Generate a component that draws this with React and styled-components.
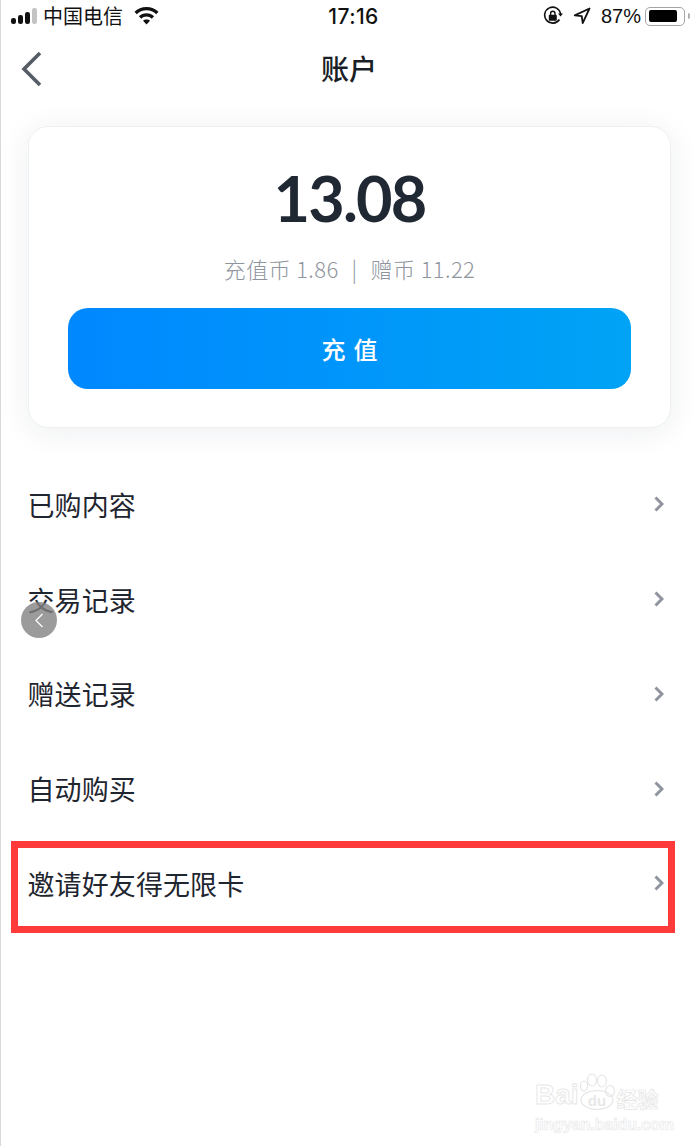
import React from 'react';
import styled, { createGlobalStyle } from 'styled-components';

const cjk = '"Noto Sans CJK SC", "Noto Sans", sans-serif';

const GlobalStyle = createGlobalStyle`
  html, body {
    margin: 0;
    padding: 0;
    background: #fff;
  }
  * {
    box-sizing: border-box;
  }
`;

const Page = styled.div`
  position: relative;
  width: 697px;
  height: 1146px;
  overflow: hidden;
  background: #fff;
  border-left: 1px solid #d9d9d9;
  font-family: ${cjk};
  color: #1f2630;
`;

const StatusBar = styled.div`
  display: grid;
  grid-template-columns: 1fr auto 1fr;
  align-items: center;
  height: 32px;
  padding: 0 7px 0 9px;
  color: #111;
  font-size: 20px;
`;

const StatusLeft = styled.div`
  display: flex;
  align-items: center;
  gap: 6px;
`;

const StatusRight = styled.div`
  display: flex;
  align-items: center;
  justify-content: flex-end;
  gap: 10px;
`;

const Carrier = styled.span`
  font-size: 20px;
  margin: 0 5px 2px 0;
`;

const Time = styled.span`
  font-family: "Inter", "Liberation Sans", sans-serif;
  font-size: 21px;
  font-weight: 500;
  letter-spacing: 0.4px;
  margin-left: 7px;
`;

const Percent = styled.span`
  font-family: "Liberation Sans", sans-serif;
  font-size: 20px;
  margin-right: -6px;
`;

const NavBar = styled.div`
  display: grid;
  grid-template-columns: 60px 1fr 60px;
  align-items: center;
  height: 74px;
`;

const BackButton = styled.div`
  display: flex;
  align-items: center;
  padding-left: 19px;
  color: #555c66;
`;

const NavTitle = styled.h1`
  margin: 0 0 2px;
  text-align: center;
  font-size: 28px;
  font-weight: 500;
  color: #1a1f27;
`;

const Card = styled.section`
  display: flex;
  flex-direction: column;
  align-items: center;
  width: 643px;
  height: 302px;
  margin: 20px 0 0 27px;
  padding: 30px 40px 0;
  background: #fff;
  border: 1px solid #f0f0f1;
  border-radius: 20px;
  box-shadow: 0 4px 30px rgba(30, 40, 60, 0.08);
`;

const Amount = styled.div`
  font-family: "Lato", "Liberation Sans", sans-serif;
  font-size: 63px;
  font-weight: 700;
  line-height: 82px;
  letter-spacing: -1.8px;
  color: #1f2833;
`;

const Balance = styled.div`
  display: flex;
  margin-top: 14px;
  font-size: 22px;
  font-weight: 300;
  line-height: 30px;
  letter-spacing: 0.4px;
  color: #8f959e;
`;

const Separator = styled.span`
  margin: 0 13px;
`;

const ChargeButton = styled.div`
  display: flex;
  align-items: center;
  justify-content: center;
  width: 563px;
  height: 81px;
  margin-top: 25px;
  border-radius: 20px;
  background: linear-gradient(90deg, #0088ff, #00a3f5);
  color: #fff;
  font-size: 24px;
  font-weight: 500;
  letter-spacing: 8px;
  text-indent: 8px;
`;

const Menu = styled.div`
  display: flex;
  flex-direction: column;
  margin-top: 29px;
`;

const Row = styled.div`
  position: relative;
  display: flex;
  align-items: center;
  justify-content: space-between;
  height: 94.75px;
  padding: 0 33px 0 26.5px;
  font-size: 27px;
  letter-spacing: 0.1px;
  color: #1f2630;
`;

const Highlight = styled.div`
  position: absolute;
  left: 10px;
  right: 22px;
  top: 5px;
  height: 92px;
  border: 7px solid #ff3a3a;
`;

const FloatingBack = styled.div`
  position: absolute;
  left: 20px;
  top: 602px;
  display: flex;
  align-items: center;
  justify-content: center;
  width: 36px;
  height: 36px;
  border-radius: 50%;
  background: rgba(130, 130, 130, 0.8);
  color: #fff;
`;

const Watermark = styled.div`
  position: absolute;
  left: 534px;
  top: 1072px;
  width: 130px;
  color: transparent;
  -webkit-text-stroke: 1px #e8e8e8;
`;

const LogoLine = styled.div`
  display: flex;
  align-items: flex-end;
  height: 38px;
  white-space: nowrap;
  font-family: "Liberation Sans", sans-serif;
  font-size: 28px;
  font-weight: 700;
  line-height: 30px;
`;

const LogoCjk = styled.span`
  font-family: ${cjk};
  font-size: 21px;
  line-height: 24px;
  -webkit-text-stroke: 0.7px #e4e4e4;
`;

const Paw = styled.svg`
  flex: none;
  width: 37px;
  height: 37px;
  margin: 0 1px 0 0;
`;

const PawText = styled.text`
  font-family: "Liberation Sans", sans-serif;
  font-size: 15px;
  font-weight: 700;
  stroke: none;
  fill: #e8e8e8;
  -webkit-text-stroke: 0;
`;

const Domain = styled.div`
  font-family: "Liberation Sans", sans-serif;
  font-size: 16px;
  font-weight: 700;
  line-height: 18px;
  letter-spacing: -0.1px;
  margin-top: 6px;
  white-space: nowrap;
  -webkit-text-stroke: 0.7px #e9e9e9;
`;

const BatteryShell = styled.div`
  display: flex;
  align-items: center;
  width: 40px;
  height: 19px;
  padding: 2.5px;
  border: 1.5px solid #a5a5a5;
  border-radius: 5px;
`;

const BatteryLevel = styled.div`
  width: 87%;
  height: 100%;
  background: #000;
  border-radius: 2px;
`;

const BatteryTip = styled.div`
  width: 2px;
  height: 6px;
  margin-left: -7px;
  background: #b0b0b0;
  border-radius: 0 2px 2px 0;
`;

const Signal = () => (
  <svg width="27" height="16" viewBox="0 0 27 16">
    <rect x="1" y="10" width="5" height="6" rx="2.2" fill="#111" />
    <rect x="8" y="7" width="5" height="9" rx="2.2" fill="#111" />
    <rect x="15" y="4" width="5" height="12" rx="2.2" fill="#111" />
    <rect x="22" y="0" width="5" height="16" rx="2.2" fill="#c4c4c4" />
  </svg>
);

const Wifi = () => (
  <svg width="25" height="18" viewBox="0 0 25 18">
    <path d="M12.5 0C7.8 0 3.6 1.8 .5 4.8l2.3 2.4c2.5-2.4 5.9-3.9 9.7-3.9s7.2 1.5 9.7 3.9l2.3-2.4C21.4 1.8 17.2 0 12.5 0z" fill="#111" />
    <path d="M12.5 6.3c-3 0-5.6 1.1-7.6 3l2.4 2.4c1.4-1.3 3.2-2.1 5.2-2.1s3.8.8 5.2 2.1l2.4-2.4c-2-1.9-4.6-3-7.6-3z" fill="#111" />
    <path d="M12.5 12.4c-1.4 0-2.6.5-3.5 1.4l3.5 3.7 3.5-3.7c-.9-.9-2.1-1.4-3.5-1.4z" fill="#111" />
  </svg>
);

const RotationLock = () => (
  <svg width="20" height="20" viewBox="0 0 20 20" fill="none">
    <path d="M16.4 13.5A8 8 0 1 1 17.6 8" stroke="#111" strokeWidth="1.6" />
    <path d="M15 7.5h5l-2.5 3z" fill="#111" />
    <rect x="5.8" y="8.8" width="8" height="6" rx="1" fill="#111" />
    <path d="M7.6 9V7.4a2.2 2.2 0 0 1 4.4 0V9" stroke="#111" strokeWidth="1.4" />
  </svg>
);

const Location = () => (
  <svg width="18" height="18" viewBox="0 0 18 18" fill="none">
    <path d="M16.5 1.5 1.8 8.4l7 .8.9 7z" stroke="#111" strokeWidth="1.8" strokeLinejoin="round" />
  </svg>
);

const Chevron = () => (
  <svg width="10" height="16" viewBox="0 0 10 16" fill="none">
    <path d="M1.5 1.5 8 8l-6.5 6.5" stroke="#8f949e" strokeWidth="3" />
  </svg>
);

const menuItems = ['已购内容', '交易记录', '赠送记录', '自动购买', '邀请好友得无限卡'];

export default function App() {
  return (
    <>
      <GlobalStyle />
      <Page>
        <StatusBar>
          <StatusLeft>
            <Signal />
            <Carrier>中国电信</Carrier>
            <Wifi />
          </StatusLeft>
          <Time>17:16</Time>
          <StatusRight>
            <RotationLock />
            <Location />
            <Percent>87%</Percent>
            <BatteryShell>
              <BatteryLevel />
            </BatteryShell>
            <BatteryTip />
          </StatusRight>
        </StatusBar>

        <NavBar>
          <BackButton>
            <svg width="22" height="36" viewBox="0 0 22 36" fill="none">
              <path d="M20 2 4 18l16 16" stroke="currentColor" strokeWidth="3.6" />
            </svg>
          </BackButton>
          <NavTitle>账户</NavTitle>
        </NavBar>

        <Card>
          <Amount>13.08</Amount>
          <Balance>
            <span>充值币 1.86</span>
            <Separator>|</Separator>
            <span>赠币 11.22</span>
          </Balance>
          <ChargeButton>充值</ChargeButton>
        </Card>

        <Menu>
          {menuItems.map((item, i) => (
            <Row key={item}>
              <span>{item}</span>
              <Chevron />
              {i === menuItems.length - 1 && <Highlight />}
            </Row>
          ))}
        </Menu>

        <FloatingBack>
          <svg width="10" height="15" viewBox="0 0 10 15" fill="none">
            <path d="M8.5 1 2 7.5 8.5 14" stroke="currentColor" strokeWidth="1.2" />
          </svg>
        </FloatingBack>

        <Watermark>
          <LogoLine>
            Bai
            <Paw viewBox="0 0 37 37" fill="none" stroke="#e6e6e6" strokeWidth="1.2">
              <ellipse cx="5" cy="13" rx="3.5" ry="5" />
              <ellipse cx="13" cy="7" rx="4.5" ry="6" />
              <ellipse cx="23" cy="8" rx="4.5" ry="6" />
              <ellipse cx="31" cy="18" rx="4.5" ry="5.5" />
              <ellipse cx="18" cy="27" rx="16" ry="9.5" />
              <PawText x="18" y="33" textAnchor="middle">du</PawText>
            </Paw>
            <LogoCjk>经验</LogoCjk>
          </LogoLine>
          <Domain>jingyan.baidu.com</Domain>
        </Watermark>
      </Page>
    </>
  );
}
